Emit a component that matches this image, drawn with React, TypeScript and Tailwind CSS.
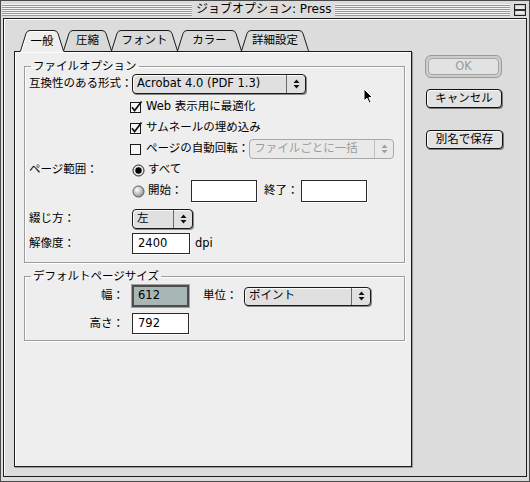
import React from 'react';

const font = "font-['DejaVu_Sans','Noto_Sans_CJK_JP',sans-serif]";
const stripes = 'bg-[repeating-linear-gradient(to_bottom,#f4f4f4_0px,#f4f4f4_1px,#979797_1px,#979797_2px)]';

function UpDown({ color = '#111' }: { color?: string }) {
  return (
    <svg width="7" height="10" viewBox="0 0 7 10" aria-hidden>
      <path d="M3.5 0.5L6.5 4H0.5Z M0.5 6H6.5L3.5 9.5Z" fill={color} />
    </svg>
  );
}

function Popup({ text, className, disabled = false }: { text: string; className: string; disabled?: boolean }) {
  return (
    <div
      className={`flex shrink-0 rounded-[4px] border ${
        disabled
          ? 'border-[#a8a8a8] text-[#9c9c9c] bg-[#e9e9e9]'
          : 'border-[#1a1a1a] bg-[#e0e0e0] shadow-[1px_1px_0_#8a8a8a,inset_1px_1px_0_#fafafa]'
      } ${className}`}
    >
      <span className="flex-1 flex items-center pl-[4px] whitespace-nowrap overflow-hidden">{text}</span>
      <span className={`w-[19px] flex items-center justify-center border-l ${disabled ? 'border-[#c0c0c0]' : 'border-[#6a6a6a]'}`}>
        <UpDown color={disabled ? '#a0a0a0' : '#111'} />
      </span>
    </div>
  );
}

function Check({ checked }: { checked: boolean }) {
  return (
    <svg width="14" height="14" viewBox="0 0 14 14" className="shrink-0">
      <rect x="1.5" y="2.5" width="10" height="10" fill="#f6f6f6" stroke="#1a1a1a" />
      {checked && <path d="M3 7.2L5.6 10.5L12.5 1.5" fill="none" stroke="#111" strokeWidth="1.7" />}
    </svg>
  );
}

function Radio({ on, id }: { on: boolean; id: string }) {
  return (
    <svg width="13" height="13" viewBox="0 0 13 13" className="shrink-0">
      <defs>
        <radialGradient id={id} cx="0.38" cy="0.35" r="0.7">
          <stop offset="0" stopColor="#ffffff" />
          <stop offset="1" stopColor="#8f8f8f" />
        </radialGradient>
      </defs>
      <circle cx="6.5" cy="6.5" r="5.5" fill={on ? '#eaeaea' : `url(#${id})`} stroke={on ? '#1a1a1a' : '#5a5a5a'} />
      {on && <circle cx="6.5" cy="6.5" r="3.2" fill="#000" />}
    </svg>
  );
}

function Field({ value, className, focused = false }: { value?: string; className: string; focused?: boolean }) {
  return focused ? (
    <div className={`shrink-0 flex items-center pl-[4px] border-2 border-[#4d4d4d] shadow-[0_0_0_1px_#a0a0a0] bg-[#a8b6b5] ${className}`}>
      {value}
    </div>
  ) : (
    <div className={`shrink-0 flex items-center pl-[5px] border border-[#2a2a2a] bg-white shadow-[1px_1px_0_#fafafa] ${className}`}>
      {value}
    </div>
  );
}

const tabs = [
  { label: '一般', w: 44 },
  { label: '圧縮', w: 49 },
  { label: 'フォント', w: 67 },
  { label: 'カラー', w: 65 },
  { label: '詳細設定', w: 68 },
];

function Tab({ label, w, selected, first }: { label: string; w: number; selected: boolean; first: boolean }) {
  const h = selected ? 22 : 21;
  const edge = `M0.5 21 L6 3.5 Q7 0.5 10 0.5 H${w - 10} Q${w - 7} 0.5 ${w - 6} 3.5 L${w - 0.5} 21`;
  const fill = `${edge} L${w - 0.5} ${h} L0.5 ${h} Z`;
  return (
    <div
      className={`relative flex items-center justify-center shrink-0 ${selected ? 'h-[22px] z-10' : 'h-[21px] mb-[1px]'} ${
        first ? '' : '-ml-[1px]'
      }`}
      style={{ width: w }}
    >
      <svg className="absolute inset-0" width={w} height={h} viewBox={`0 0 ${w} ${h}`}>
        <path d={fill} fill={selected ? '#eeeeee' : '#d9d9d9'} />
        {selected && <path d={`M1.7 21 L7 4 Q8 1.5 10 1.5 H${w - 10}`} fill="none" stroke="#ffffff" />}
        <path d={edge} fill="none" stroke="#1c1c1c" />
      </svg>
      <span className="relative pt-[1px]">{label}</span>
    </div>
  );
}

function MacButton({ label, className }: { label: string; className: string }) {
  return (
    <div
      className={`flex items-center justify-center rounded-[4px] border border-[#111] bg-[#e2e2e2] shadow-[1px_1px_0_#7a7a7a,inset_1px_1px_0_#fbfbfb] ${className}`}
    >
      {label}
    </div>
  );
}

function Cursor() {
  return (
    <svg className="absolute left-[362px] top-[87px]" width="11" height="17" viewBox="0 0 11 17">
      <path d="M1 1 L1 13 L4 10.2 L6.2 15 L8 14.2 L5.9 9.6 L9.6 9.6 Z" fill="#000" stroke="#fff" strokeWidth="1" />
    </svg>
  );
}

export default function App() {
  return (
    <div className={`relative w-[530px] h-[482px] bg-[#dcdcdc] border border-[#4a4a4a] flex flex-col text-[11.5px] text-black ${font}`}>
      {/* title bar */}
      <div className="h-[17px] flex items-center pl-[1px] pr-[3px]">
        <div className={`w-[190px] h-[12px] ${stripes}`} />
        <div className="px-[4px] leading-[17px] whitespace-nowrap text-[12px]">ジョブオプション: Press</div>
        <div className={`flex-1 h-[12px] ${stripes}`} />
        <svg className="ml-[4px]" width="12" height="12" viewBox="0 0 12 12">
          <rect x="0.5" y="0.5" width="11" height="11" fill="#c9c9c9" stroke="#222" />
          <rect x="2" y="2" width="8" height="3" fill="#e8e8e8" />
          <rect x="2" y="7" width="8" height="3" fill="#e8e8e8" />
          <path d="M1 5.5H11M1 6.5H11" stroke="#333" />
        </svg>
      </div>

      {/* window content */}
      <div className="flex-1 mx-[2px] mb-[4px] border border-[#1e1e1e] shadow-[inset_1px_1px_0_#ffffff] flex">
        <div className="pl-[10px] pt-[11px] flex flex-col">
          <div className="flex items-end ml-[6px] -mb-[1px] relative z-10">
            {tabs.map((t, i) => (
              <Tab key={t.label} label={t.label} w={t.w} selected={i === 0} first={i === 0} />
            ))}
          </div>

          <div className="w-[398px] h-[416px] border border-[#1c1c1c] bg-[#eeeeee] shadow-[1px_1px_0_#9a9a9a,inset_1px_1px_0_#ffffff] pl-[9px] pt-[7px]">
            {/* file options */}
            <fieldset className="w-[381px] border border-[#9c9c9c] shadow-[1px_1px_0_#ffffff,inset_1px_1px_0_#ffffff] pl-[4px] pb-[8px]">
              <legend className="ml-[2px] px-[2px] leading-[14px]">ファイルオプション</legend>
              <div className="flex flex-col">
                <div className="flex items-center h-[20px] mt-[1px]">
                  <span className="w-[103px] whitespace-nowrap">互換性のある形式：</span>
                  <Popup text="Acrobat 4.0 (PDF 1.3)" className="w-[174px] h-[20px]" />
                </div>
                <div className="flex items-center h-[21px] mt-[2px] pl-[100px]">
                  <Check checked />
                  <span className="ml-[3px]">Web 表示用に最適化</span>
                </div>
                <div className="flex items-center h-[21px] pl-[100px]">
                  <Check checked />
                  <span className="ml-[3px]">サムネールの埋め込み</span>
                </div>
                <div className="flex items-center h-[21px] pl-[100px]">
                  <Check checked={false} />
                  <span className="ml-[3px] whitespace-nowrap">ページの自動回転：</span>
                  <Popup text="ファイルごとに一括" disabled className="w-[145px] h-[20px]" />
                </div>
                <div className="flex items-center h-[20px] mt-[1px]">
                  <span className="w-[103px]">ページ範囲：</span>
                  <Radio on id="r1" />
                  <span className="ml-[3px]">すべて</span>
                </div>
                <div className="flex items-center h-[22px]">
                  <span className="w-[103px]" />
                  <div className="w-[59px] flex items-center">
                    <Radio on={false} id="r2" />
                    <span className="ml-[3px]">開始：</span>
                  </div>
                  <Field className="w-[66px] h-[22px]" />
                  <span className="ml-[7px] w-[37px] whitespace-nowrap">終了：</span>
                  <Field className="w-[66px] h-[22px]" />
                </div>
                <div className="flex items-center h-[21px] mt-[6px]">
                  <span className="w-[103px]">綴じ方：</span>
                  <Popup text="左" className="w-[61px] h-[20px]" />
                </div>
                <div className="flex items-center h-[21px] mt-[4px]">
                  <span className="w-[103px]">解像度：</span>
                  <Field value="2400" className="w-[58px] h-[21px]" />
                  <span className="ml-[5px]">dpi</span>
                </div>
              </div>
            </fieldset>

            {/* default page size */}
            <fieldset className="w-[381px] mt-[6px] border border-[#9c9c9c] shadow-[1px_1px_0_#ffffff,inset_1px_1px_0_#ffffff] pl-[4px] pb-[6px]">
              <legend className="ml-[2px] px-[2px] leading-[14px]">デフォルトページサイズ</legend>
              <div className="flex items-center h-[22px] mt-[2px]">
                <span className="w-[95px] text-right">幅：</span>
                <Field focused value="612" className="w-[57px] h-[22px] ml-[8px]" />
                <span className="ml-[14px] w-[41px] whitespace-nowrap">単位：</span>
                <Popup text="ポイント" className="w-[127px] h-[19px]" />
              </div>
              <div className="flex items-center h-[21px] mt-[6px]">
                <span className="w-[95px] text-right">高さ：</span>
                <Field value="792" className="w-[57px] h-[21px] ml-[8px]" />
              </div>
            </fieldset>
          </div>
        </div>

        {/* buttons */}
        <div className="ml-[13px] pt-[36px] flex flex-col">
          <div className="w-[77px] h-[23px] rounded-[6px] border border-[#9a9a9a] bg-[#cdcdcd] p-[2px]">
            <div className="h-full rounded-[4px] border border-[#a6a6a6] bg-[#e2e2e2] text-[#9a9a9a] flex items-center justify-center">
              OK
            </div>
          </div>
          <MacButton label="キャンセル" className="w-[76px] h-[19px] mt-[11px] ml-[1px]" />
          <MacButton label="別名で保存" className="w-[77px] h-[19px] mt-[22px] ml-[1px]" />
        </div>
      </div>

      <Cursor />
    </div>
  );
}
